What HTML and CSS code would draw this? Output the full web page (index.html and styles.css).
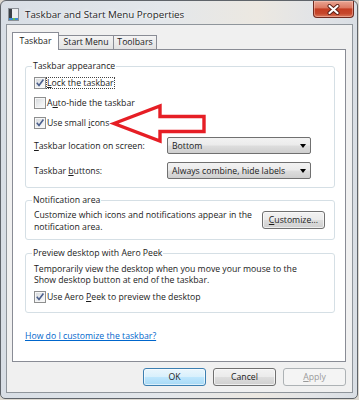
FILE: index.html
```html
<!DOCTYPE html>
<html lang="en">
<head>
	<meta charset="UTF-8">

	<title>Taskbar and Start Menu Properties</title>

	<meta name="viewport" content="width=device-width, initial-scale=1">
	<link rel="stylesheet" href="styles.css">
</head>



<body>
<div class="window">
	<header class="titlebar">
		<svg class="app-icon" width="11" height="13" viewBox="0 0 11 13" aria-hidden="true">
			<rect x="0.5" y="0.5" width="10" height="12" fill="#eceef0" stroke="#8b9096"/>
			<rect x="1" y="1" width="3" height="11" fill="#3b4046"/>
			<rect x="1" y="10" width="9" height="2" fill="#3d8bd0"/>
			<rect x="5" y="10" width="2" height="2" fill="#6cc04a"/>
		</svg>
		<span class="title">Taskbar and Start Menu Properties</span>
		<button class="close" type="button" aria-label="Close">
			<svg width="13" height="11" viewBox="0 0 13 11" aria-hidden="true">
				<path d="M2.5 2 L10.5 9 M10.5 2 L2.5 9" stroke="#5a1d14" stroke-width="4" stroke-linecap="round"/>
				<path d="M2.5 2 L10.5 9 M10.5 2 L2.5 9" stroke="#fff" stroke-width="2.2" stroke-linecap="round"/>
			</svg>
		</button>
	</header><!--.titlebar end-->

	<div class="client">
		<div class="tab-strip">
			<span class="tab active">Taskbar</span>
			<span class="tab start-menu">Start Menu</span>
			<span class="tab toolbars">Toolbars</span>
		</div>

		<div class="panel">
			<fieldset class="group appearance">
				<legend>Taskbar appearance</legend>
				<label class="row check first">
					<span class="box"><svg width="10" height="10" viewBox="0 0 10 10"><path d="M1.8 4.8 L4 7.5 L8.4 1.6" fill="none" stroke="#4a5e8c" stroke-width="1.6"/></svg></span>
					<span class="focus"><u>L</u>ock the taskbar</span>
				</label>
				<label class="row check">
					<span class="box"></span>
					<span>A<u>u</u>to-hide the taskbar</span>
				</label>
				<label class="row check">
					<span class="box"><svg width="10" height="10" viewBox="0 0 10 10"><path d="M1.8 4.8 L4 7.5 L8.4 1.6" fill="none" stroke="#4a5e8c" stroke-width="1.6"/></svg></span>
					<span>Use small <u>i</u>cons</span>
				</label>
				<div class="row field">
					<span class="field-label"><u>T</u>askbar location on screen:</span>
					<div class="combo"><span>Bottom</span><span class="caret"></span></div>
				</div>
				<div class="row field">
					<span class="field-label">Taskbar <u>b</u>uttons:</span>
					<div class="combo"><span>Always combine, hide labels</span><span class="caret"></span></div>
				</div>
			</fieldset><!--.appearance end-->

			<fieldset class="group notification">
				<legend>Notification area</legend>
				<div class="notify-row">
					<p>Customize which icons and notifications appear in the<br>notification area.</p>
					<button class="btn customize" type="button"><u>C</u>ustomize...</button>
				</div>
			</fieldset><!--.notification end-->

			<fieldset class="group peek">
				<legend>Preview desktop with Aero Peek</legend>
				<p>Temporarily view the desktop when you move your mouse to the<br>Show desktop button at end of the taskbar.</p>
				<label class="row check">
					<span class="box"><svg width="10" height="10" viewBox="0 0 10 10"><path d="M1.8 4.8 L4 7.5 L8.4 1.6" fill="none" stroke="#4a5e8c" stroke-width="1.6"/></svg></span>
					<span>Use Aero <u>P</u>eek to preview the desktop</span>
				</label>
			</fieldset><!--.peek end-->

			<a class="help" href="#">How do I customize the taskbar?</a>
		</div><!--.panel end-->

		<div class="actions">
			<button class="btn default" type="button">OK</button>
			<button class="btn" type="button">Cancel</button>
			<button class="btn" type="button" disabled><u>A</u>pply</button>
		</div>
	</div><!--.client end-->
</div><!--.window end-->

<svg class="callout" width="359" height="400" viewBox="0 0 359 400" aria-hidden="true">
	<polygon points="114,123.5 160,106 160,116.5 204,116.5 204,131.5 160,131.5 160,141" fill="none" stroke="#e61e25" stroke-width="3.4" stroke-linejoin="miter"/>
</svg>
</body>
</html>
```

FILE: styles.css
```css
*,
::before,
::after {
	box-sizing: border-box;
}
body {
	margin: 0;
	width: 359px;
	height: 400px;
	overflow: hidden;
	position: relative;
	background: #dcd8d0;
	color: #1b1b1b;
	font-family: "Open Sans", "Liberation Sans", sans-serif;
	font-size: 8.7px;
}
p {
	margin: 0;
}
u {
	text-decoration-thickness: 1px;
	text-underline-offset: 1px;
}

/* window frame */
.window {
	width: 358px;
	height: 399px;
	display: flex;
	flex-direction: column;
	padding: 0 4px 5px 5px;
	border: 1px solid #5f646a;
	border-radius: 6px 6px 5px 5px;
	background: linear-gradient(90deg, #d8dee5 0%, #e3e7eb 45%, #ece8e1 72%, #e2e4e7 88%, #d9dee4 100%);
}
.titlebar {
	height: 23px;
	flex: none;
	margin: 0 -4px 0 -5px;
	padding: 3px 0 0 7px;
	display: flex;
	align-items: center;
}
.app-icon {
	flex: none;
}
.title {
	margin-left: 6px;
	font-size: 9.8px;
	color: #1e1e1e;
	text-shadow: 0 0 5px #fff, 0 0 2px #fff;
}
.close {
	align-self: flex-start;
	margin: -3px 3px 0 auto;
	width: 41px;
	height: 17px;
	padding: 0;
	display: flex;
	align-items: center;
	justify-content: center;
	border: 1px solid #6f2a20;
	border-top: 0;
	border-radius: 0 0 4px 4px;
	background: linear-gradient(#e9a593 0%, #dc7a63 42%, #c43d22 50%, #c6472c 78%, #d9785c 100%);
	box-shadow: inset 0 0 0 1px rgba(255, 210, 200, 0.45);
}

/* client area */
.client {
	flex: 1;
	display: flex;
	flex-direction: column;
	padding: 7px 6px 0 5px;
	border: 1px solid #8f959b;
	background: #f0f0f0;
}
.tab-strip {
	height: 17px;
	display: flex;
	align-items: flex-end;
}
.tab {
	height: 14px;
	line-height: 12px;
	text-align: center;
	border: 1px solid #898c95;
	border-bottom: 0;
	background: linear-gradient(#f4f4f4, #e2e2e2);
}
.tab.active {
	width: 47px;
	height: 18px;
	line-height: 16px;
	margin-bottom: -1px;
	position: relative;
	z-index: 1;
	background: #fff;
}
.tab.start-menu {
	width: 55px;
	border-left: 0;
}
.tab.toolbars {
	width: 43px;
	border-left: 0;
}
.panel {
	height: 313px;
	flex: none;
	display: flex;
	flex-direction: column;
	align-items: flex-start;
	padding: 0 10px 0 12px;
	border: 1px solid #898c95;
	background: #fff;
}

/* group boxes */
.group {
	width: 100%;
	min-width: 0;
	margin: 0;
	padding: 0 8px 4px;
	border: 1px solid #d5dfe5;
	border-radius: 3px;
}
legend {
	padding: 0 1px;
	margin-left: -2px;
	line-height: 12px;
}
.appearance {
	margin-top: 10px;
}
.notification {
	margin-top: 6px;
	padding-right: 9px;
	padding-bottom: 6px;
}
.peek {
	margin-top: 7px;
	padding-bottom: 5px;
}
.row {
	display: flex;
	align-items: center;
	white-space: nowrap;
}
.check {
	height: 20px;
	gap: 1px;
}
.check.first {
	height: 21px;
}
.field {
	height: 25px;
}
.field-label {
	flex: 0 0 133px;
}
.box {
	width: 12px;
	height: 12px;
	flex: none;
	display: flex;
	align-items: center;
	justify-content: center;
	border: 1px solid #8e8f8f;
	background: linear-gradient(135deg, #d3d6da 0%, #eef0f1 60%, #fafafa 100%);
	box-shadow: inset 0 0 0 1px #f6f6f6;
}
.focus {
	margin-left: -1px;
	line-height: 10px;
	border: 1px dotted #444;
}
.combo {
	width: 144px;
	height: 17px;
	display: flex;
	align-items: center;
	justify-content: space-between;
	padding: 0 4px 0 4px;
	border: 1px solid #707070;
	border-radius: 2px;
	background: linear-gradient(#f2f2f2 0%, #ebebeb 48%, #dddddd 52%, #cfcfcf 100%);
}
.caret {
	width: 0;
	height: 0;
	border-left: 3px solid transparent;
	border-right: 3px solid transparent;
	border-top: 4px solid #000;
}
.notify-row {
	display: flex;
	align-items: flex-start;
}
.notify-row p {
	padding-top: 4px;
	line-height: 11.5px;
	white-space: nowrap;
}
.customize {
	margin: 5px 0 0 auto;
}
.peek p {
	padding-top: 4.5px;
	line-height: 11px;
	white-space: nowrap;
}
.peek .check {
	margin-top: 1.5px;
}
.help {
	margin-top: 17px;
	line-height: 12px;
	color: #0066cc;
	text-decoration-thickness: 1px;
}

/* command buttons */
.actions {
	display: flex;
	justify-content: flex-end;
	gap: 7px;
	margin-top: 6px;
	padding-right: 0;
}
.btn {
	width: 63px;
	height: 18px;
	padding: 0;
	font: inherit;
	color: #1b1b1b;
	border: 1px solid #707070;
	border-radius: 3px;
	background: linear-gradient(#f2f2f2 0%, #ebebeb 48%, #dddddd 52%, #cfcfcf 100%);
	box-shadow: inset 0 0 0 1px rgba(252, 252, 252, 0.7);
}
.btn.default {
	border-color: #3c7fb1;
	background: linear-gradient(#eaf6fd 0%, #d9f0fc 48%, #bee6fd 52%, #a7d9f5 100%);
	box-shadow: inset 0 0 0 1px rgba(255, 255, 255, 0.6);
}
.btn:disabled {
	color: #9a9a9a;
	border-color: #adb2b5;
	background: #f4f4f4;
	box-shadow: none;
}

/* red callout drawn over the dialog */
.callout {
	position: absolute;
	top: 0;
	left: 0;
	pointer-events: none;
}
```
